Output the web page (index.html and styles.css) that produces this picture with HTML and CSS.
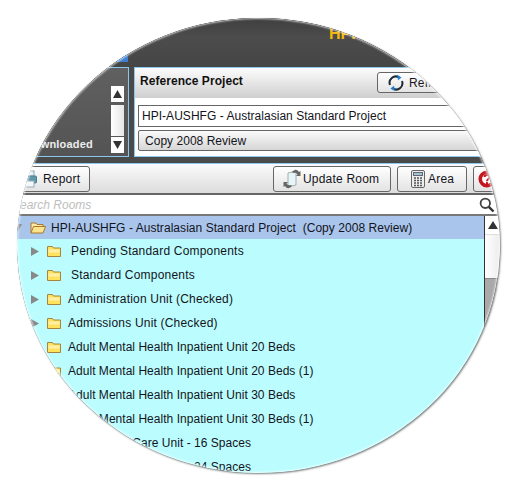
FILE: index.html
```html
<!DOCTYPE html>
<html lang="en">
<head>
<meta charset="utf-8">
<title>Reference Project</title>
<link rel="stylesheet" href="styles.css">
</head>
<body>
<div class="lens">
  <header class="top">
    <span class="tab"></span>
    <span class="brand">HPI</span>
  </header>
  <section class="projects">
    <div class="list-panel">
      <span class="list-label">Downloaded</span>
      <div class="mini-scroll">
        <span class="mini-btn"><svg width="9" height="8" viewBox="0 0 9 8"><path d="M4.5 0L9 8H0z" fill="#333"/></svg></span>
        <span class="mini-thumb"></span>
        <span class="mini-btn"><svg width="9" height="8" viewBox="0 0 9 8"><path d="M0 0h9L4.5 8z" fill="#333"/></svg></span>
      </div>
    </div>
    <div class="ref-panel">
      <div class="ref-head">
        <h2 class="ref-title">Reference Project</h2>
        <button class="btn btn-refresh">
          <svg width="18" height="18" viewBox="0 0 18 18"><path d="M3 11A6.3 6.3 0 0 1 12 3.3" fill="none" stroke="#1f2a33" stroke-width="2"/><path d="M15 7a6.3 6.3 0 0 1-9 7.7" fill="none" stroke="#1f2a33" stroke-width="2"/><path d="M10 .8l4.6 2.6-3.6 2.8zM8 17.2l-4.6-2.6 3.6-2.8z" fill="#1d7fd6"/></svg>
          Refresh
        </button>
      </div>
      <div class="ref-input">HPI-AUSHFG - Australasian Standard Project</div>
      <div class="ref-select">Copy 2008 Review</div>
    </div>
  </section>
  <nav class="toolbar">
    <button class="btn btn-report">
      <svg width="16" height="18" viewBox="0 0 16 18"><rect x="3" y="1" width="9" height="5" fill="#eef" stroke="#8aa"/><rect x="0.5" y="6" width="14" height="7" rx="1" fill="#5f98a8" stroke="#4c7f8e"/><rect x="3" y="11" width="9" height="6" fill="#f4f8f8" stroke="#9ab"/></svg>
      Report
    </button>
    <button class="btn btn-update">
      <svg width="22" height="22" viewBox="0 0 22 22"><path d="M7 5l8-2v14l-8 2z" fill="#e4f6fa" stroke="#aaa"/><path d="M11 4.500C13 1 16 1 18 4l1.500-1v5h-4.500l1.500-1.500C15.500 5 14 4.500 13 5z" fill="#666"/><path d="M11 17.500C9 21 6 21 4 18l-1.500 1v-5h4.500L5.500 15.500C6.500 17 8 17.500 9 17z" fill="#666"/></svg>
      Update Room
    </button>
    <button class="btn btn-area">
      <svg width="14" height="18" viewBox="0 0 14 18"><rect x="0.500" y="0.500" width="13" height="17" rx="1.500" fill="#eee" stroke="#666"/><rect x="2.500" y="2.500" width="9" height="3" fill="#9fc4cf" stroke="#667"/><path d="M3 8h2M6 8h2M9 8h2M3 10.500h2M6 10.500h2M9 10.500h2M3 13h2M6 13h2M9 13h2M3 15.500h2M6 15.500h2M9 15.500h2" stroke="#555" stroke-width="1.300"/></svg>
      Area
    </button>
    <button class="btn btn-help">
      <svg width="18" height="18" viewBox="0 0 16 16"><circle cx="8" cy="8" r="6" fill="#fff" stroke="#c3171d" stroke-width="3.200"/><path d="M5.800 6.200C6 3.800 10.300 3.800 10.300 6.200 10.300 8 8 8 8 10" fill="none" stroke="#c3171d" stroke-width="1.800"/><rect x="7.100" y="10.800" width="1.800" height="1.800" fill="#c3171d"/></svg>
    </button>
  </nav>
  <div class="search">
    <span class="search-text">Search Rooms</span>
    <svg class="search-icon" width="16" height="16" viewBox="0 0 16 16"><circle cx="6.300" cy="6.300" r="4.700" fill="#fff" stroke="#444" stroke-width="1.800"/><path d="M9.800 9.800l4.700 4.700" stroke="#333" stroke-width="2.400"/></svg>
  </div>
  <div class="tree-wrap">
    <div class="tree">
      <div class="root">
        <svg class="root-arrow" width="8" height="8" viewBox="0 0 8 8"><path d="M0 0h8L4 7z" fill="#888"/></svg>
        <svg class="folder-open" width="16" height="13" viewBox="0 0 16 13"><path d="M1 12V2h5l1 1.500h6V6" fill="#fbe9a8" stroke="#a8782c"/><path d="M1 12l2.500-6.500H15.500L13 12z" fill="#fde48c" stroke="#a8782c"/></svg>
        <span>HPI-AUSHFG - Australasian Standard Project&nbsp; (Copy 2008 Review)</span>
      </div>
      <div class="row row-indent"><svg class="arrow" width="8" height="9" viewBox="0 0 8 9"><path d="M0 0l8 4.500L0 9z"/></svg><svg class="folder" width="14" height="12" viewBox="0 0 14 12"><path d="M.5 11.500V1.500h5l1 1.500h7v8.500z" fill="#ffe25e" stroke="#a8843c"/><path d="M1.500 4.500h11v3h-11z" fill="#fff0a8"/></svg><span>Pending Standard Components</span></div>
      <div class="row row-indent"><svg class="arrow" width="8" height="9" viewBox="0 0 8 9"><path d="M0 0l8 4.500L0 9z"/></svg><svg class="folder" width="14" height="12" viewBox="0 0 14 12"><path d="M.5 11.500V1.500h5l1 1.500h7v8.500z" fill="#ffe25e" stroke="#a8843c"/><path d="M1.500 4.500h11v3h-11z" fill="#fff0a8"/></svg><span>Standard Components</span></div>
      <div class="row"><svg class="arrow" width="8" height="9" viewBox="0 0 8 9"><path d="M0 0l8 4.500L0 9z"/></svg><svg class="folder" width="14" height="12" viewBox="0 0 14 12"><path d="M.5 11.500V1.500h5l1 1.500h7v8.500z" fill="#ffe25e" stroke="#a8843c"/><path d="M1.500 4.500h11v3h-11z" fill="#fff0a8"/></svg><span>Administration Unit (Checked)</span></div>
      <div class="row"><svg class="arrow" width="8" height="9" viewBox="0 0 8 9"><path d="M0 0l8 4.500L0 9z"/></svg><svg class="folder" width="14" height="12" viewBox="0 0 14 12"><path d="M.5 11.500V1.500h5l1 1.500h7v8.500z" fill="#ffe25e" stroke="#a8843c"/><path d="M1.500 4.500h11v3h-11z" fill="#fff0a8"/></svg><span>Admissions Unit (Checked)</span></div>
      <div class="row row-tight"><svg class="arrow" width="8" height="9" viewBox="0 0 8 9"><path d="M0 0l8 4.500L0 9z"/></svg><svg class="folder" width="14" height="12" viewBox="0 0 14 12"><path d="M.5 11.500V1.500h5l1 1.500h7v8.500z" fill="#ffe25e" stroke="#a8843c"/><path d="M1.500 4.500h11v3h-11z" fill="#fff0a8"/></svg><span>Adult Mental Health Inpatient Unit 20 Beds</span></div>
      <div class="row row-tight"><svg class="arrow" width="8" height="9" viewBox="0 0 8 9"><path d="M0 0l8 4.500L0 9z"/></svg><svg class="folder" width="14" height="12" viewBox="0 0 14 12"><path d="M.5 11.500V1.500h5l1 1.500h7v8.500z" fill="#ffe25e" stroke="#a8843c"/><path d="M1.500 4.500h11v3h-11z" fill="#fff0a8"/></svg><span>Adult Mental Health Inpatient Unit 20 Beds (1)</span></div>
      <div class="row row-tight"><svg class="arrow" width="8" height="9" viewBox="0 0 8 9"><path d="M0 0l8 4.500L0 9z"/></svg><svg class="folder" width="14" height="12" viewBox="0 0 14 12"><path d="M.5 11.500V1.500h5l1 1.500h7v8.500z" fill="#ffe25e" stroke="#a8843c"/><path d="M1.500 4.500h11v3h-11z" fill="#fff0a8"/></svg><span>Adult Mental Health Inpatient Unit 30 Beds</span></div>
      <div class="row row-tight"><svg class="arrow" width="8" height="9" viewBox="0 0 8 9"><path d="M0 0l8 4.500L0 9z"/></svg><svg class="folder" width="14" height="12" viewBox="0 0 14 12"><path d="M.5 11.500V1.500h5l1 1.500h7v8.500z" fill="#ffe25e" stroke="#a8843c"/><path d="M1.500 4.500h11v3h-11z" fill="#fff0a8"/></svg><span>Adult Mental Health Inpatient Unit 30 Beds (1)</span></div>
      <div class="row row-tight"><svg class="arrow" width="8" height="9" viewBox="0 0 8 9"><path d="M0 0l8 4.500L0 9z"/></svg><svg class="folder" width="14" height="12" viewBox="0 0 14 12"><path d="M.5 11.500V1.500h5l1 1.500h7v8.500z" fill="#ffe25e" stroke="#a8843c"/><path d="M1.500 4.500h11v3h-11z" fill="#fff0a8"/></svg><span>Ambulatory Care Unit - 16 Spaces</span></div>
      <div class="row row-tight"><svg class="arrow" width="8" height="9" viewBox="0 0 8 9"><path d="M0 0l8 4.500L0 9z"/></svg><svg class="folder" width="14" height="12" viewBox="0 0 14 12"><path d="M.5 11.500V1.500h5l1 1.500h7v8.500z" fill="#ffe25e" stroke="#a8843c"/><path d="M1.500 4.500h11v3h-11z" fill="#fff0a8"/></svg><span>Ambulatory Care Unit - 24 Spaces</span></div>
    </div>
    <div class="tree-scroll">
      <span class="tree-up"><svg width="10" height="8" viewBox="0 0 10 8"><path d="M5 0l5 8H0z" fill="#333"/></svg></span>
      <span class="tree-thumb"></span>
    </div>
  </div>
</div>
</body>
</html>
```

FILE: styles.css
```css
* { box-sizing: border-box; }
html, body { margin: 0; height: 100%; background: #fff; }
body {
  font-family: "Liberation Sans", Arial, sans-serif;
  font-size: 12px;
  color: #141420;
  letter-spacing: .2px;
}
.lens {
  position: absolute;
  left: 17px;
  top: 18px;
  width: 483px;
  height: 455px;
  border-radius: 50%;
  overflow: hidden;
  background: #4a4a4a;
  box-shadow: 1px 1px 2px rgba(0, 0, 0, .5);
}
.lens::after {
  content: "";
  position: absolute;
  inset: 0;
  border-radius: 50%;
  box-shadow: inset 0 0 2px 1px rgba(255, 255, 255, .75);
  pointer-events: none;
}
.top {
  height: 49px;
  display: flex;
  background: linear-gradient(#3f3f3f, #4c4c4c 40%, #454545);
}
.tab {
  width: 28px;
  height: 7px;
  margin: 37px 0 0 83px;
  background: #3b7ed0;
}
.brand {
  margin: 7px 0 0 201px;
  font-size: 16px;
  font-weight: 700;
  color: #f3b90c;
  letter-spacing: 0;
}
.projects {
  height: 90px;
  display: flex;
  gap: 5px;
}
.list-panel {
  width: 112px;
  flex: none;
  border: 1px solid #8cc8ee;
  border-left: 0;
  background: linear-gradient(#606060, #545454);
  display: flex;
  justify-content: flex-end;
  align-items: flex-end;
  gap: 19px;
  padding: 0 4px 3px 0;
}
.list-label {
  font-size: 11px;
  font-weight: 700;
  color: #ececec;
  padding-bottom: 3px;
  margin-right: -1px;
}
.mini-scroll {
  width: 13px;
  height: 67px;
  display: flex;
  flex-direction: column;
}
.mini-btn {
  height: 16px;
  flex: none;
  background: #fff;
  display: flex;
  align-items: center;
  justify-content: center;
}
.mini-thumb {
  flex: 1;
  margin: 3px 0 1px;
  background: linear-gradient(90deg, #fff, #e6e6e6);
}
.ref-panel {
  flex: 1;
  border: 1px solid #8cc8ee;
  background: #fff;
  margin-right: -20px;
  display: flex;
  flex-direction: column;
}
.ref-head {
  height: 30px;
  flex: none;
  background: linear-gradient(#fcfcfc, #cfcfcf);
  display: flex;
  align-items: flex-start;
  justify-content: space-between;
  padding: 4px 0 0 5px;
}
.ref-title {
  margin: 2px 0 0;
  font-size: 12px;
  font-weight: 700;
  color: #111;
  letter-spacing: .05px;
}
.btn {
  height: 26px;
  flex: none;
  border: 1px solid #666;
  border-radius: 3px;
  background: linear-gradient(#fff, #e3e3e3);
  display: flex;
  align-items: center;
  font: inherit;
  letter-spacing: inherit;
  color: inherit;
  padding: 0;
}
.btn svg {
  flex: none;
}
.btn-refresh {
  width: 110px;
  height: 21px;
  margin-right: 32px;
  padding-left: 9px;
  gap: 4px;
}
.ref-input {
  height: 22px;
  flex: none;
  margin: 7px 0 0 3px;
  border: 1px solid #666;
  background: #fff;
  padding: 3px 0 0 3px;
  letter-spacing: .03px;
}
.ref-select {
  height: 21px;
  flex: none;
  margin: 3px 0 0 3px;
  border: 1px solid #666;
  border-radius: 2px;
  background: linear-gradient(#fafafa, #d6d6d6);
  padding: 3px 0 0 6px;
  letter-spacing: .03px;
}
.toolbar {
  height: 32px;
  margin-top: 6px;
  border-top: 1px solid #8cc8ee;
  border-bottom: 2px solid #666;
  background: linear-gradient(#fbfbfb, #dcdcdc);
  display: flex;
  padding-top: 2px;
}
.btn-report {
  width: 88px;
  margin-left: -15px;
  padding-left: 19px;
  gap: 5px;
}
.btn-update {
  width: 118px;
  margin-left: 183px;
  padding-left: 7px;
}
.btn-area {
  width: 70px;
  margin-left: 6px;
  padding-left: 13px;
  gap: 3px;
}
.btn-help {
  width: 40px;
  margin-left: 6px;
  padding-left: 4px;
}
.search {
  height: 21px;
  border-bottom: 2px solid #777;
  background: #fff;
  display: flex;
  align-items: center;
  justify-content: space-between;
  padding: 0 5px 0 0;
}
.search-text {
  font-style: italic;
  color: #bdbdbd;
  margin-left: -5px;
  letter-spacing: 0;
}
.search-icon {
  margin-top: 1px;
}
.tree-wrap {
  display: flex;
  height: 260px;
}
.tree {
  flex: 1;
  background: #bbfdff;
}
.root {
  height: 23px;
  background: #a9c5ec;
  display: flex;
  align-items: center;
  white-space: pre;
  letter-spacing: .05px;
}
.root-arrow {
  margin-left: -3px;
  flex: none;
}
.folder-open {
  flex: none;
  margin-left: 8px;
  margin-right: 5px;
}
.row {
  height: 24px;
  display: flex;
  align-items: center;
  white-space: nowrap;
}
.row-tight {
  letter-spacing: .03px;
}
.arrow {
  flex: none;
  margin-left: 14px;
  fill: #888;
}
.folder {
  flex: none;
  margin-left: 8px;
  margin-right: 7px;
}
.row-indent .folder {
  margin-right: 10px;
}
.tree-scroll {
  width: 16px;
  flex: none;
  background: #a9a9a9;
  border-left: 1px solid #333;
  display: flex;
  flex-direction: column;
}
.tree-up {
  height: 18px;
  background: #fff;
  display: flex;
  align-items: center;
  justify-content: center;
}
.tree-thumb {
  height: 45px;
  background: linear-gradient(90deg, #fff, #ececec);
  border-top: 1px solid #ddd;
  border-bottom: 1px solid #888;
}
```
